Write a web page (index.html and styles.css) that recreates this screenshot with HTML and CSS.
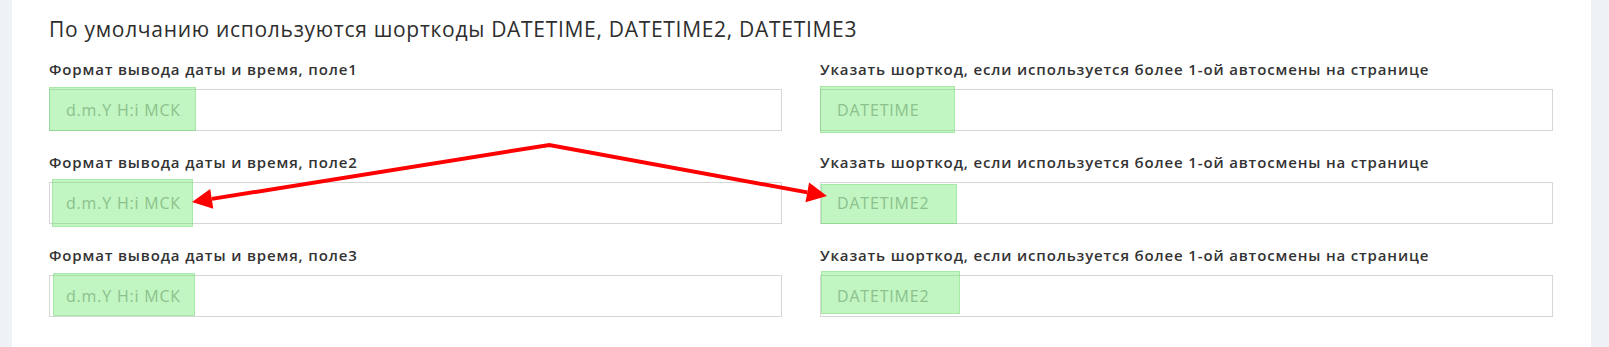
FILE: index.html
```html
<!DOCTYPE html>
<html lang="ru">
<head>
<meta charset="utf-8">
<link rel="stylesheet" href="styles.css">
</head>
<body>
<div class="page">
  <div class="strip strip-left"></div>
  <main class="main">
    <h2 class="title">По умолчанию используются шорткоды DATETIME, DATETIME2, DATETIME3</h2>
    <div class="grid">
      <div class="field">
        <label class="label">Формат вывода даты и время, поле1</label>
        <div class="box">
          <input class="input" type="text" placeholder="d.m.Y H:i МСК">
          <span class="mark mark-l1"></span>
        </div>
      </div>
      <div class="field">
        <label class="label">Указать шорткод, если используется более 1-ой автосмены на странице</label>
        <div class="box">
          <input class="input" type="text" placeholder="DATETIME">
          <span class="mark mark-r1"></span>
        </div>
      </div>
      <div class="field">
        <label class="label">Формат вывода даты и время, поле2</label>
        <div class="box">
          <input class="input" type="text" placeholder="d.m.Y H:i МСК">
          <span class="mark mark-l2"></span>
        </div>
      </div>
      <div class="field">
        <label class="label">Указать шорткод, если используется более 1-ой автосмены на странице</label>
        <div class="box">
          <input class="input" type="text" placeholder="DATETIME2">
          <span class="mark mark-r2"></span>
        </div>
      </div>
      <div class="field">
        <label class="label">Формат вывода даты и время, поле3</label>
        <div class="box">
          <input class="input" type="text" placeholder="d.m.Y H:i МСК">
          <span class="mark mark-l3"></span>
        </div>
      </div>
      <div class="field">
        <label class="label">Указать шорткод, если используется более 1-ой автосмены на странице</label>
        <div class="box">
          <input class="input" type="text" placeholder="DATETIME2">
          <span class="mark mark-r3"></span>
        </div>
      </div>
    </div>
  </main>
  <div class="strip strip-right"></div>
  <svg class="arrows" width="1609" height="347" viewBox="0 0 1609 347" xmlns="http://www.w3.org/2000/svg">
    <polyline points="211.8,198.9 549.3,145 807.3,192.4" fill="none" stroke="#fe0000" stroke-width="4" stroke-linejoin="miter" stroke-miterlimit="10"/>
    <polygon points="192,202 213.3,208.7 210.2,189" fill="#fe0000"/>
    <polygon points="827,196 805.5,202.2 809.1,182.6" fill="#fe0000"/>
  </svg>
</div>
</body>
</html>
```
FILE: styles.css
```css
html, body {
  margin: 0;
  padding: 0;
  background: #ffffff;
}

.page {
  position: relative;
  display: flex;
  width: 1609px;
  height: 347px;
  overflow: hidden;
  font-family: "Open Sans", "Noto Sans", sans-serif;
  color: #333333;
}

.strip {
  background: #eef1f5;
  flex: none;
}

.strip-left {
  width: 12px;
}

.strip-right {
  width: 18px;
}

.main {
  flex: 1;
  padding: 15px 38px 0 37px;
  background: #ffffff;
}

.title {
  margin: 0;
  font-size: 21px;
  font-weight: 400;
  letter-spacing: 0.7px;
  line-height: 29px;
  color: #2e2e2e;
}

.grid {
  display: grid;
  grid-template-columns: 1fr 1fr;
  column-gap: 38px;
  row-gap: 21px;
  margin-top: 15px;
}

.field {
  display: flex;
  flex-direction: column;
  gap: 9px;
}

.label {
  font-size: 15px;
  font-weight: 600;
  letter-spacing: 0.85px;
  line-height: 21px;
  color: #333333;
}

.box {
  position: relative;
  height: 42px;
}

.input {
  box-sizing: border-box;
  width: 100%;
  height: 42px;
  margin: 0;
  padding: 0 16px;
  border: 1px solid #d6d6d6;
  border-radius: 0;
  background: #ffffff;
  font-family: "Open Sans", "Noto Sans", sans-serif;
  font-size: 16px;
  letter-spacing: 0.8px;
  color: #333333;
  outline: none;
}

.input::placeholder {
  color: #a8a8a8;
  opacity: 1;
}

.mark {
  position: absolute;
  box-sizing: border-box;
  background: rgba(100, 230, 100, 0.4);
  border: 1px solid rgba(90, 200, 90, 0.25);
  pointer-events: none;
}

.mark-l1 { left: 0; top: -2px; width: 147px; height: 44px; }
.mark-r1 { left: 0; top: -3px; width: 135px; height: 47px; }
.mark-l2 { left: 3px; top: -3px; width: 141px; height: 48px; }
.mark-r2 { left: 1px; top: 2px; width: 136px; height: 40px; }
.mark-l3 { left: 4px; top: -2px; width: 142px; height: 43px; }
.mark-r3 { left: 1px; top: -4px; width: 139px; height: 43px; }

.arrows {
  position: absolute;
  top: 0;
  left: 0;
  pointer-events: none;
}
```
